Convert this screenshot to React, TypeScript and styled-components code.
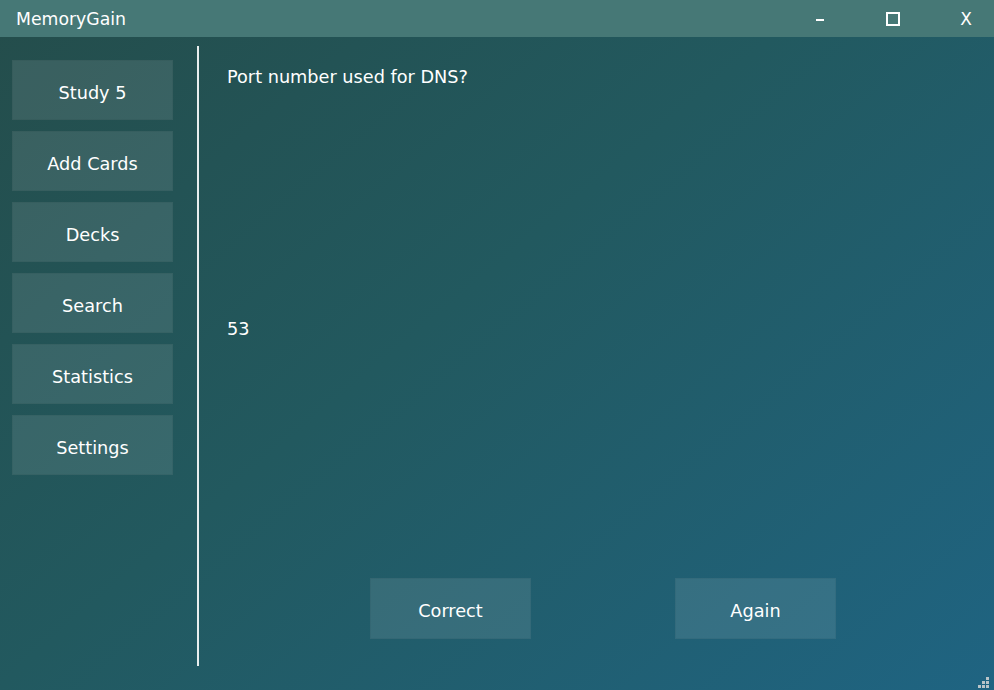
import React from "react";
import styled, { createGlobalStyle } from "styled-components";

const Global = createGlobalStyle`
  html, body { margin: 0; padding: 0; }
  body { font-family: "DejaVu Sans", Verdana, sans-serif; }
  * { box-sizing: border-box; }
`;

const Window = styled.div`
  width: 994px;
  height: 690px;
  display: flex;
  flex-direction: column;
  position: relative;
  overflow: hidden;
  color: #ffffff;
  background: linear-gradient(140deg, #244d4b 0%, #22595f 45%, #1f6482 100%);
`;

const TitleBar = styled.div`
  height: 37px;
  flex: none;
  display: flex;
  align-items: center;
  background: #467876;
  padding-left: 16px;
`;

const Title = styled.div`
  flex: 1;
  font-size: 17.3px;
`;

const Controls = styled.div`
  display: flex;
  align-items: center;
  height: 100%;
`;

const Control = styled.div<{ $w: number }>`
  width: ${(p) => p.$w}px;
  height: 100%;
  display: flex;
  align-items: center;
  justify-content: center;
  font-size: 17px;
`;

const Dash = styled.div`
  width: 8px;
  height: 2px;
  background: #fff;
  margin-top: 2px;
`;

const Square = styled.div`
  width: 14px;
  height: 14px;
  border: 2px solid #fff;
`;

const Body = styled.div`
  flex: 1;
  display: flex;
`;

const Sidebar = styled.div`
  width: 197px;
  flex: none;
  padding: 23px 0 0 12px;
  display: flex;
  flex-direction: column;
  gap: 11px;
`;

const NavButton = styled.div`
  width: 161px;
  height: 60px;
  display: flex;
  align-items: center;
  justify-content: center;
  padding-top: 5px;
  background: rgba(255, 255, 255, 0.1);
  border: 1px solid rgba(0, 0, 0, 0.04);
  font-size: 17.7px;
`;

const Divider = styled.div`
  width: 2px;
  flex: none;
  margin: 9px 0 24px;
  background: #e8eeee;
`;

const Main = styled.div`
  flex: 1;
  display: flex;
  flex-direction: column;
  padding: 28px 0 0 28px;
`;

const Question = styled.div`
  font-size: 17.7px;
  line-height: 24px;
  height: 24px;
`;

const Answer = styled.div`
  font-size: 17.7px;
  line-height: 24px;
  margin-top: 228px;
`;

const Actions = styled.div`
  margin-top: auto;
  margin-bottom: 51px;
  display: flex;
  gap: 144px;
  padding-left: 143px;
`;

const ActionButton = styled.div`
  width: 161px;
  height: 61px;
  display: flex;
  align-items: center;
  justify-content: center;
  padding-top: 4px;
  background: rgba(255, 255, 255, 0.1);
  border: 1px solid rgba(0, 0, 0, 0.04);
  font-size: 17.7px;
`;

const Grip = styled.svg`
  position: absolute;
  right: 4px;
  bottom: 1px;
`;

export default function App() {
  const nav = ["Study 5", "Add Cards", "Decks", "Search", "Statistics", "Settings"];
  return (
    <>
      <Global />
      <Window>
        <TitleBar>
          <Title>MemoryGain</Title>
          <Controls>
            <Control $w={56}><Dash /></Control>
            <Control $w={90}><Square /></Control>
            <Control $w={56}>X</Control>
          </Controls>
        </TitleBar>
        <Body>
          <Sidebar>
            {nav.map((n) => (
              <NavButton key={n}>{n}</NavButton>
            ))}
          </Sidebar>
          <Divider />
          <Main>
            <Question>Port number used for DNS?</Question>
            <Answer>53</Answer>
            <Actions>
              <ActionButton>Correct</ActionButton>
              <ActionButton>Again</ActionButton>
            </Actions>
          </Main>
        </Body>
        <Grip width="12" height="12" viewBox="0 0 12 12">
          <g fill="#b9c4c8">
            <rect x="8" y="0" width="3" height="3" />
            <rect x="4" y="4" width="3" height="3" />
            <rect x="8" y="4" width="3" height="3" />
            <rect x="0" y="8" width="3" height="3" />
            <rect x="4" y="8" width="3" height="3" />
            <rect x="8" y="8" width="3" height="3" />
          </g>
        </Grip>
      </Window>
    </>
  );
}
